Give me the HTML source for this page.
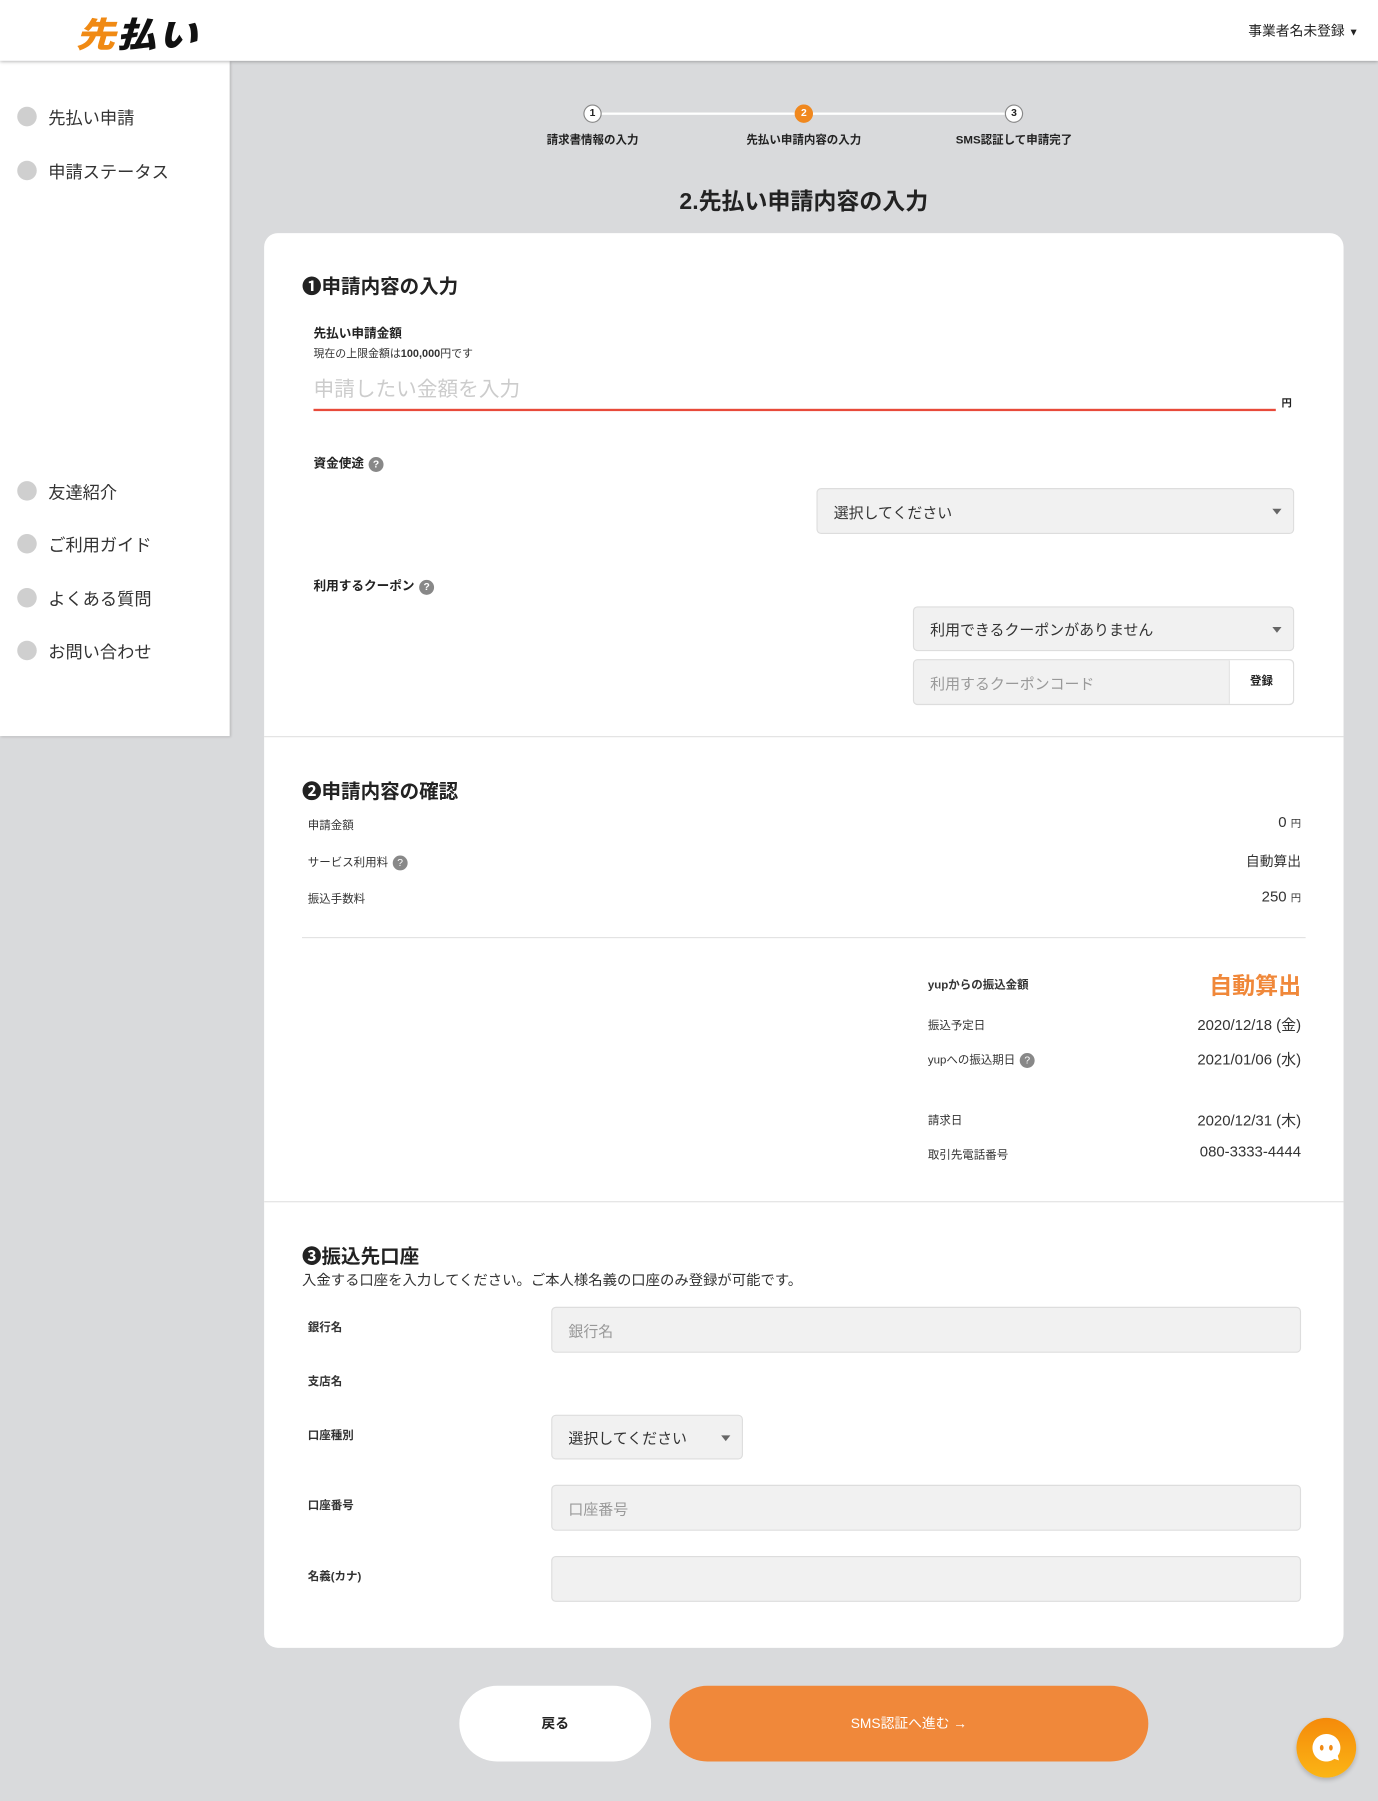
<!DOCTYPE html>
<html><head><meta charset="utf-8"><style>
*{margin:0;padding:0;box-sizing:border-box}
html,body{width:1378px;height:1800px;overflow:hidden;background:#d9dadc}
body{font-family:"Liberation Sans","Noto Sans CJK JP",sans-serif;color:#222}
#w{position:absolute;left:0;top:0;width:1200px;height:1568px;transform:scale(1.14833);transform-origin:0 0}
.a{position:absolute;white-space:nowrap}
.hdr{left:0;top:0;width:1200px;height:53px;background:#fff;box-shadow:0 1px 3px rgba(0,0,0,.3);z-index:2}
.side{left:0;top:53px;width:200px;height:588px;background:#fff;box-shadow:1px 1px 2px rgba(0,0,0,.15)}
.dot{width:17px;height:17px;border-radius:50%;background:#cfcfcf}
.nav{font-size:15px;color:#333}
.sc{width:16px;height:16px;border-radius:50%;background:#fff;border:1.5px solid #888;font-size:9px;font-weight:bold;text-align:center;line-height:13px}
.sl{font-size:10px;font-weight:bold;transform:translateX(-50%)}
.card{left:230px;top:203px;width:940px;height:1232px;background:#fff;border-radius:12px}
.h{font-size:17px;font-weight:bold}
.lb{font-size:11px;font-weight:bold}
.sm{font-size:10px;color:#333}
.q{display:inline-block;width:13px;height:13px;border-radius:50%;background:#888;color:#fff;font-size:9px;text-align:center;line-height:13px;vertical-align:middle;margin-left:4px}
.box{background:#f1f1f1;border:1px solid #ddd;border-radius:4px;font-size:13px;color:#333;padding-left:14px;display:flex;align-items:center}
.ph{color:#999}
.car{position:absolute;right:10px;top:50%;margin-top:-2px;border-left:4px solid transparent;border-right:4px solid transparent;border-top:5px solid #666}
.r{text-align:right;transform:translateX(-100%);font-size:13px;color:#333}
.line{height:1px;background:#e2e2e2}
</style></head><body><div id="w">
<div class="a hdr">
<div class="a" style="left:66px;top:6px;font-size:30px;font-weight:900;font-style:italic;letter-spacing:1px;transform:scaleX(1.15);transform-origin:0 0"><span style="color:#f08a14">先</span><span style="color:#111">払い</span></div>
<div class="a" style="left:1087px;top:18px;font-size:12px;color:#222">事業者名未登録 <span style="font-size:9px">▼</span></div>
</div>
<div class="a side"></div>
<div class="a dot" style="left:15px;top:93px"></div><div class="a nav" style="left:42px;top:92px">先払い申請</div>
<div class="a dot" style="left:15px;top:140px"></div><div class="a nav" style="left:42px;top:139px">申請ステータス</div>
<div class="a dot" style="left:15px;top:419px"></div><div class="a nav" style="left:42px;top:418px">友達紹介</div>
<div class="a dot" style="left:15px;top:465px"></div><div class="a nav" style="left:42px;top:464px">ご利用ガイド</div>
<div class="a dot" style="left:15px;top:512px"></div><div class="a nav" style="left:42px;top:511px">よくある質問</div>
<div class="a dot" style="left:15px;top:558px"></div><div class="a nav" style="left:42px;top:557px">お問い合わせ</div>

<div class="a" style="left:516px;top:98px;width:367px;height:2px;background:#fff"></div>
<div class="a sc" style="left:508px;top:91px">1</div>
<div class="a sc" style="left:692px;top:91px;background:#f0881e;border-color:#f0881e;color:#fff">2</div>
<div class="a sc" style="left:875px;top:91px">3</div>
<div class="a sl" style="left:516px;top:113px">請求書情報の入力</div>
<div class="a sl" style="left:700px;top:113px">先払い申請内容の入力</div>
<div class="a sl" style="left:883px;top:113px">SMS認証して申請完了</div>
<div class="a" style="left:700px;top:159px;transform:translateX(-50%);font-size:20px;font-weight:bold">2.先払い申請内容の入力</div>

<div class="a card"></div>
<div class="a h" style="left:263px;top:235px">❶申請内容の入力</div>
<div class="a lb" style="left:273px;top:282px">先払い申請金額</div>
<div class="a sm" style="left:273px;top:300px;font-size:9.5px">現在の上限金額は<b>100,000</b>円です</div>
<div class="a" style="left:273px;top:325px;font-size:18px;color:#ccc">申請したい金額を入力</div>
<div class="a" style="left:273px;top:356px;width:838px;height:1.5px;background:#e84a3a"></div>
<div class="a" style="left:1116px;top:344px;font-size:9px;font-weight:bold">円</div>
<div class="a lb" style="left:273px;top:395px">資金使途<span class="q">?</span></div>
<div class="a box" style="left:711px;top:425px;width:416px;height:40px">選択してください<span class="car"></span></div>
<div class="a lb" style="left:273px;top:502px">利用するクーポン<span class="q">?</span></div>
<div class="a box" style="left:795px;top:528px;width:332px;height:39px">利用できるクーポンがありません<span class="car"></span></div>
<div class="a box ph" style="left:795px;top:574px;width:332px;height:40px">利用するクーポンコード</div>
<div class="a" style="left:1070px;top:575px;width:56px;height:38px;background:#fff;border-left:1px solid #ddd;border-radius:0 4px 4px 0;font-size:10px;font-weight:bold;text-align:center;line-height:38px">登録</div>
<div class="a line" style="left:230px;top:641px;width:940px"></div>

<div class="a h" style="left:263px;top:675px">❷申請内容の確認</div>
<div class="a sm" style="left:268px;top:710px">申請金額</div><div class="a r" style="left:1133px;top:708px">0 <span style="font-size:9px">円</span></div>
<div class="a sm" style="left:268px;top:742px">サービス利用料<span class="q">?</span></div><div class="a r" style="left:1133px;top:741px;font-size:12px">自動算出</div>
<div class="a sm" style="left:268px;top:774px">振込手数料</div><div class="a r" style="left:1133px;top:773px">250 <span style="font-size:9px">円</span></div>
<div class="a line" style="left:263px;top:816px;width:874px"></div>
<div class="a sm" style="left:808px;top:849px;font-weight:bold">yupからの振込金額</div><div class="a r" style="left:1133px;top:842px;font-size:20px;font-weight:bold;color:#f0883a">自動算出</div>
<div class="a sm" style="left:808px;top:884px">振込予定日</div><div class="a r" style="left:1133px;top:882px">2020/12/18 (金)</div>
<div class="a sm" style="left:808px;top:914px">yupへの振込期日<span class="q">?</span></div><div class="a r" style="left:1133px;top:912px">2021/01/06 (水)</div>
<div class="a sm" style="left:808px;top:967px">請求日</div><div class="a r" style="left:1133px;top:965px">2020/12/31 (木)</div>
<div class="a sm" style="left:808px;top:997px">取引先電話番号</div><div class="a r" style="left:1133px;top:995px">080-3333-4444</div>
<div class="a line" style="left:230px;top:1046px;width:940px"></div>

<div class="a h" style="left:263px;top:1080px">❸振込先口座</div>
<div class="a" style="left:263px;top:1104px;font-size:12.5px;color:#333">入金する口座を入力してください。ご本人様名義の口座のみ登録が可能です。</div>
<div class="a sm" style="left:268px;top:1147px;font-weight:bold">銀行名</div>
<div class="a box ph" style="left:480px;top:1138px;width:653px;height:40px">銀行名</div>
<div class="a sm" style="left:268px;top:1194px;font-weight:bold">支店名</div>
<div class="a sm" style="left:268px;top:1241px;font-weight:bold">口座種別</div>
<div class="a box" style="left:480px;top:1232px;width:167px;height:39px">選択してください<span class="car"></span></div>
<div class="a sm" style="left:268px;top:1302px;font-weight:bold">口座番号</div>
<div class="a box ph" style="left:480px;top:1293px;width:653px;height:40px">口座番号</div>
<div class="a sm" style="left:268px;top:1364px;font-weight:bold">名義(カナ)</div>
<div class="a box" style="left:480px;top:1355px;width:653px;height:40px"></div>

<div class="a" style="left:400px;top:1468px;width:167px;height:66px;background:#fff;border-radius:33px;text-align:center;line-height:66px;font-size:12px;font-weight:bold">戻る</div>
<div class="a" style="left:583px;top:1468px;width:417px;height:66px;background:#f0883a;border-radius:33px;text-align:center;line-height:66px;font-size:12px;color:#fff">SMS認証へ進む →</div>
<div class="a" style="left:1129px;top:1496px;width:52px;height:52px;border-radius:50%;background:linear-gradient(#f58a0a,#fbb515);box-shadow:0 2px 4px rgba(0,0,0,.2)">
<svg width="52" height="52" viewBox="0 0 52 52"><path d="M26 14a12 12 0 1 0 7 21.7l4 1.3-1-4A12 12 0 0 0 26 14z" fill="#fff"/><ellipse cx="22" cy="26" rx="1.6" ry="2.5" fill="#f08a14"/><ellipse cx="30" cy="26" rx="1.6" ry="2.5" fill="#f08a14"/></svg>
</div>
</div></body></html>
